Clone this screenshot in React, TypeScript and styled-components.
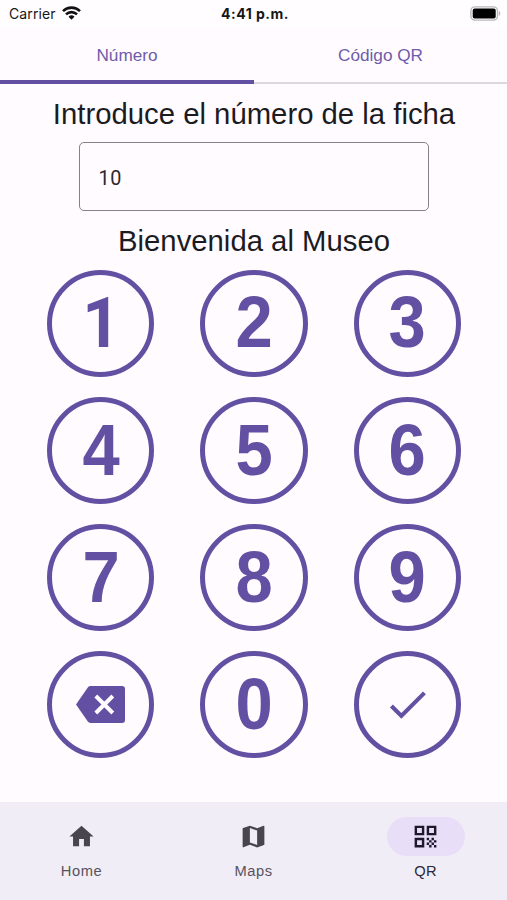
import React from "react";
import styled, { createGlobalStyle } from "styled-components";

const GlobalStyle = createGlobalStyle`
  * { box-sizing: border-box; }
  body { margin: 0; background: #fffbff; }
  button, input { font: inherit; color: inherit; background: none; border: 0; padding: 0; margin: 0; }
`;

const Screen = styled.div`
  width: 507px;
  height: 900px;
  display: flex;
  flex-direction: column;
  background: #fffbff;
  color: #1c1b1f;
  font-family: "Liberation Sans", Arial, sans-serif;
  overflow: hidden;
`;

const StatusBar = styled.header`
  height: 28px;
  flex: none;
  display: grid;
  grid-template-columns: 1fr auto 1fr;
  align-items: center;
  padding: 0 6px 2px 9px;
  background: #fffdff;
  font-family: Inter, sans-serif;
  font-size: 14px;
  color: #161616;
`;

const Carrier = styled.div`
  display: flex;
  align-items: center;
  gap: 6px;
  letter-spacing: 0.12px;
`;

const Clock = styled.div`
  font-weight: 650;
  font-size: 14px;
  letter-spacing: 0.5px;
`;

const BatterySlot = styled.div`
  display: flex;
  justify-content: flex-end;
`;

const Tabs = styled.nav`
  height: 56px;
  flex: none;
  display: grid;
  grid-template-columns: 254px 1fr;
`;

const Tab = styled.button<{ $active?: boolean }>`
  height: 56px;
  padding-top: ${(p) => (p.$active ? "3px" : "1px")};
  border-bottom: ${(p) => (p.$active ? "4px solid #6450a2" : "2px solid #dcd8de")};
  color: #6f5cab;
  font-size: 17.2px;
`;

const Content = styled.main`
  flex: 1;
  display: flex;
  flex-direction: column;
  align-items: center;
`;

const Heading = styled.h1`
  margin: 0 0 0 1px;
  height: 58px;
  line-height: 60px;
  font-size: 29.3px;
  font-weight: 400;
  white-space: nowrap;
`;

const NumberField = styled.input`
  && {
    width: 350px;
    height: 69px;
    padding: 3px 19px 0;
    border: 1px solid #858187;
    border-radius: 5px;
    font-family: Roboto, sans-serif;
    font-size: 19.8px;
    letter-spacing: 0.6px;
    color: #2b292e;
    outline: none;
  }
`;

const Keypad = styled.div`
  display: grid;
  grid-template-columns: repeat(3, 107.5px);
  column-gap: 45.8px;
  row-gap: 19.6px;
  margin: 0.7px 0 0 1px;
`;

const Key = styled.button`
  && {
    width: 107.5px;
    height: 107.5px;
    display: flex;
    align-items: center;
    justify-content: center;
    border: 5px solid #6450a2;
    border-radius: 50%;
    color: #6450a2;
  }
`;

const Digit = styled.span<{ $plain?: boolean }>`
  font-family: ${(p) => (p.$plain ? "Roboto" : '"Liberation Sans"')}, Arial, sans-serif;
  font-size: ${(p) => (p.$plain ? "70.5px" : "72px")};
  font-weight: 700;
  line-height: 96px;
  transform: ${(p) => (p.$plain ? "translateX(1px) scaleX(0.94)" : "translateY(-1.4px) scaleX(0.93)")};
`;

const BottomBar = styled.nav`
  height: 98px;
  flex: none;
  display: grid;
  grid-template-columns: repeat(3, 172px);
  justify-content: center;
  padding-top: 15px;
  background: #f1edf7;
`;

const Destination = styled.button<{ $active?: boolean }>`
  display: flex;
  flex-direction: column;
  align-items: center;
  gap: 6px;
  align-self: start;
  color: ${(p) => (p.$active ? "#2b2735" : "#57535d")};
  font-size: 14.7px;
  line-height: 18px;
  letter-spacing: ${(p) => (p.$active ? "0.2px" : "0.55px")};
`;

const Indicator = styled.span<{ $active?: boolean }>`
  width: 78px;
  height: 39px;
  display: flex;
  align-items: center;
  justify-content: center;
  border-radius: 20px;
  color: ${(p) => (p.$active ? "#1d192b" : "#49454f")};
  background: ${(p) => (p.$active ? "#e8def8" : "transparent")};
`;

const icons = {
  home: "M10 20v-6h4v6h5v-8h3L12 3 2 12h3v8z",
  map: "M20.5 3l-.16.03L15 5.1 9 3 3.36 4.9c-.21.07-.36.25-.36.48V20.5c0 .28.22.5.5.5l.16-.03L9 18.9l6 2.1 5.64-1.9c.21-.07.36-.25.36-.48V3.5c0-.28-.22-.5-.5-.5zM15 19l-6-2.11V5l6 2.11V19z",
  qr: "M3 11h8V3H3v8zm2-6h4v4H5V5zM3 21h8v-8H3v8zm2-6h4v4H5v-4zM13 3v8h8V3h-8zm6 6h-4V5h4v4zM19 19h2v2h-2zM13 13h2v2h-2zM15 15h2v2h-2zM13 17h2v2h-2zM15 19h2v2h-2zM17 17h2v2h-2zM17 13h2v2h-2zM19 15h2v2h-2z",
  check: "M9 16.17L4.83 12l-1.42 1.41L9 19 21 7l-1.41-1.41z",
};

function Icon({ name, size }: { name: keyof typeof icons; size: number }) {
  return (
    <svg width={size} height={size} viewBox="0 0 24 24" fill="currentColor" aria-hidden="true">
      <path d={icons[name]} />
    </svg>
  );
}

function WifiIcon() {
  return (
    <svg width="19" height="14" viewBox="0 0 19 14" fill="none" stroke="#111" strokeWidth="2.6" aria-hidden="true">
      <path d="M1 5.1a12.2 12.2 0 0 1 17 0" />
      <path d="M4 8.4a7.9 7.9 0 0 1 11 0" />
      <path d="M9.5 13.8l-3-3.1a4.4 4.4 0 0 1 6 0z" fill="#111" stroke="none" />
    </svg>
  );
}

function BatteryIcon() {
  return (
    <svg width="31" height="15" viewBox="0 0 31 15" aria-hidden="true">
      <rect x="0.9" y="0.9" width="26.6" height="13.2" rx="4" fill="#fff" stroke="#b9b8ba" strokeWidth="1.4" />
      <rect x="2.7" y="2.5" width="23" height="10" rx="2" fill="#000" />
      <path d="M28.8 5v5c2-.8 2-4.2 0-5z" fill="#b9b8ba" />
    </svg>
  );
}

function BackspaceIcon() {
  return (
    <svg width="49" height="37" viewBox="0 0 49 37" aria-hidden="true">
      <path d="M14.5 0H46Q49 0 49 3V34Q49 37 46 37H14.5Q12.8 37 11.8 35.6L0 18.5 11.8 1.4Q12.8 0 14.5 0z" fill="currentColor" />
      <path d="M19.8 10l17 17M36.8 10l-17 17" fill="none" stroke="#fffbff" strokeWidth="4" />
    </svg>
  );
}

const digits = ["1", "2", "3", "4", "5", "6", "7", "8", "9"];

export default function App() {
  return (
    <Screen>
      <GlobalStyle />
      <StatusBar>
        <Carrier>
          <span>Carrier</span>
          <WifiIcon />
        </Carrier>
        <Clock>4:41 p.m.</Clock>
        <BatterySlot>
          <BatteryIcon />
        </BatterySlot>
      </StatusBar>
      <Tabs>
        <Tab $active>Número</Tab>
        <Tab>Código QR</Tab>
      </Tabs>
      <Content>
        <Heading>Introduce el número de la ficha</Heading>
        <NumberField defaultValue="10" aria-label="Número de la ficha" />
        <Heading as="h2">Bienvenida al Museo</Heading>
        <Keypad>
          {digits.map((digit) => (
            <Key key={digit}>
              <Digit $plain={digit === "1"}>{digit}</Digit>
            </Key>
          ))}
          <Key aria-label="Borrar">
            <BackspaceIcon />
          </Key>
          <Key>
            <Digit>0</Digit>
          </Key>
          <Key aria-label="Aceptar">
            <Icon name="check" size={49} />
          </Key>
        </Keypad>
      </Content>
      <BottomBar>
        <Destination>
          <Indicator>
            <Icon name="home" size={29} />
          </Indicator>
          Home
        </Destination>
        <Destination>
          <Indicator>
            <Icon name="map" size={29} />
          </Indicator>
          Maps
        </Destination>
        <Destination $active>
          <Indicator $active>
            <Icon name="qr" size={29} />
          </Indicator>
          QR
        </Destination>
      </BottomBar>
    </Screen>
  );
}
